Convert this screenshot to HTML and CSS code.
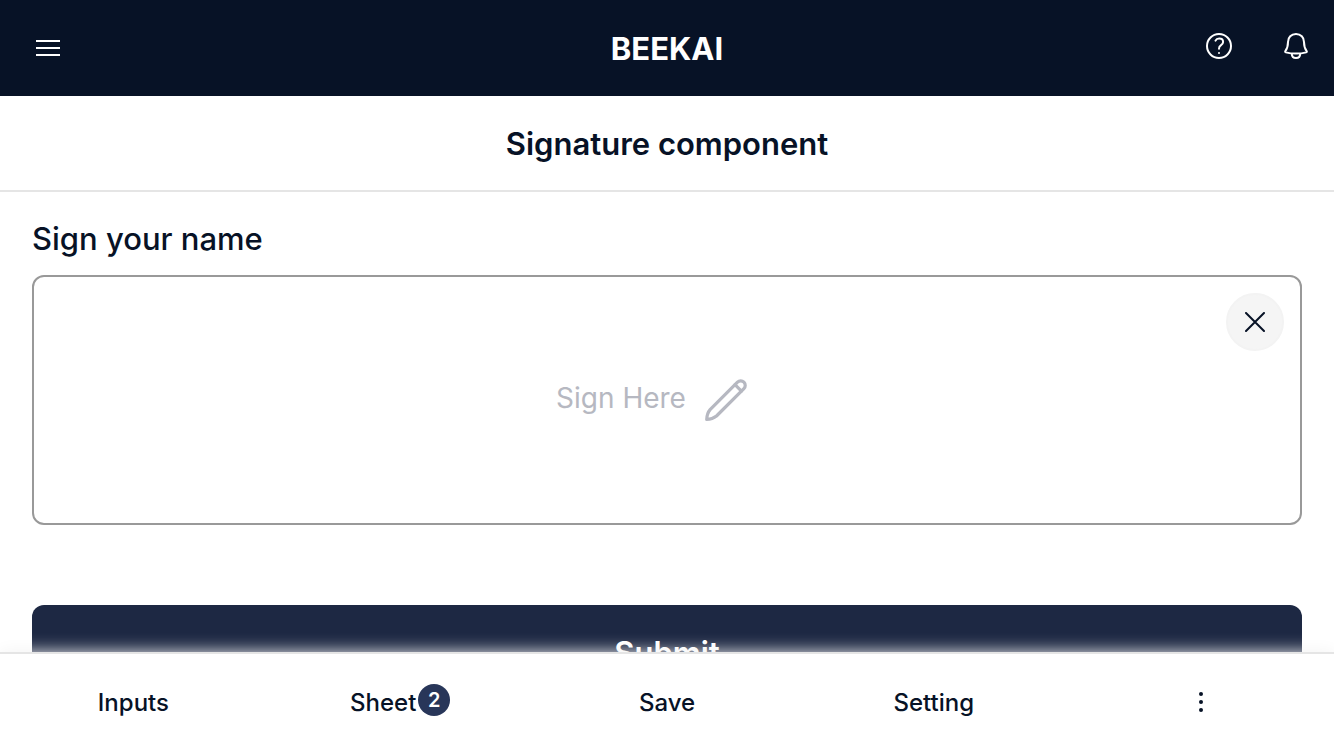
FILE: index.html
```html
<!DOCTYPE html>
<html lang="en">
<head>
  <meta charset="UTF-8" />
  <meta name="viewport" content="width=device-width, initial-scale=1.0" />
  <title>Signature component – BEEKAI</title>
  <link rel="stylesheet" href="styles.css">
</head>
<body>
  <header class="topbar">
    <div class="topbar-side">
      <button class="icon-btn" type="button" aria-label="Menu">
        <svg width="24" height="24" viewBox="0 0 24 24" fill="none" stroke="currentColor" stroke-width="2">
          <path d="M0 5h24M0 12h24M0 19h24" />
        </svg>
      </button>
    </div>
    <div class="brand">BEEKAI</div>
    <div class="topbar-side topbar-actions">
      <button class="icon-btn" type="button" aria-label="Help">
        <svg width="28" height="28" viewBox="0 0 28 28" fill="none" stroke="currentColor" stroke-width="2" stroke-linecap="round">
          <circle cx="14" cy="14" r="12" />
          <path d="M10.500 8.600C11.200 7.200 12.600 6.600 14.200 6.600c2.200 0 3.900 1.400 3.900 3.400 0 1.800-1.100 2.600-2.300 3.400-1.200.8-1.800 1.500-1.800 3.400" />
          <circle cx="14" cy="21" r="1" fill="currentColor" stroke="none" />
        </svg>
      </button>
      <button class="icon-btn" type="button" aria-label="Notifications">
        <svg width="28" height="28" viewBox="0 0 28 28" fill="none" stroke="currentColor" stroke-width="2" stroke-linejoin="round">
          <path d="M14 2C9.200 2 6 5.500 6 10c0 5-1 7-2.700 9.200-.4.600-.2 1 .5 1.200C7 21.200 10 21.600 14 21.600s7-.4 10.200-1.200c.7-.2.9-.6.5-1.200C23 17 22 15 22 10c0-4.500-3.200-8-8-8z" />
          <path d="M9.800 21.500c0 2.700 1.700 4.500 4.200 4.500s4.200-1.800 4.200-4.500" />
        </svg>
      </button>
    </div>
  </header>

  <div class="title-bar">
    <h1>Signature component</h1>
  </div>

  <main class="content">
    <h2 class="field-label">Sign your name</h2>
    <div class="sign-box">
      <div class="placeholder">
        <span>Sign Here</span>
        <svg width="48" height="48" viewBox="0 0 48 48" fill="none" stroke="currentColor" stroke-width="3.2" stroke-linejoin="round" stroke-linecap="round">
          <path d="M35.500 6.200a4.500 4.500 0 0 1 6.400 6.400L14.500 40C12 42 8.500 43.300 4.700 43.500 4.900 39.500 6 36 8.100 33.600z" />
          <path d="M33 8.700l6.400 6.400" />
        </svg>
      </div>
      <button class="clear-btn" type="button" aria-label="Clear signature">
        <svg width="20" height="20" viewBox="0 0 20 20" fill="none" stroke="currentColor" stroke-width="2" stroke-linecap="round">
          <path d="M1 1l18 18M19 1L1 19" />
        </svg>
      </button>
    </div>
    <button class="submit-btn" type="submit">Submit</button>
  </main>

  <nav class="bottom-nav">
    <a href="#inputs">Inputs</a>
    <a href="#sheet">Sheet<span class="badge">2</span></a>
    <a href="#save">Save</a>
    <a href="#setting">Setting</a>
    <button class="more-btn" type="button" aria-label="More">
      <svg width="4" height="20" viewBox="0 0 4 20" fill="currentColor">
        <circle cx="2" cy="2" r="2" />
        <circle cx="2" cy="10" r="2" />
        <circle cx="2" cy="18" r="2" />
      </svg>
    </button>
  </nav>
</body>
</html>
```

FILE: styles.css
```css
* { box-sizing: border-box; margin: 0; padding: 0; }
body {
  display: flex; flex-direction: column; height: 100vh; overflow: hidden;
  font-family: Inter, "Liberation Sans", sans-serif; background: #fff; color: #071226;
}
button { font-family: inherit; border: none; background: none; color: inherit; cursor: pointer; }
svg { display: block; }

.topbar {
  display: flex; align-items: center; flex-shrink: 0;
  height: 96px; padding: 0 24px 0 36px; background: #071226; color: #fff;
}
.topbar-side { flex: 1; }
.topbar-actions { display: flex; justify-content: flex-end; gap: 49px; padding-bottom: 4px; }
.icon-btn { display: block; }
.brand { font-size: 31px; font-weight: 700; line-height: 40px; padding: 2px 12px 0 0; }

.title-bar {
  flex-shrink: 0; padding: 28px 32px 26px; border-bottom: 2px solid #e5e5e5; text-align: center;
}
.title-bar h1 { font-size: 31px; font-weight: 600; line-height: 40px; }

.content { flex: 1; min-height: 0; overflow: hidden; padding: 27px 32px 0; }
.field-label { font-size: 31px; font-weight: 500; line-height: 40px; margin-bottom: 16px; }
.sign-box {
  position: relative; display: flex; align-items: center; justify-content: center;
  height: 250px; margin-bottom: 80px; border: 2px solid #999; border-radius: 12px;
}
.placeholder {
  display: flex; align-items: center; gap: 16px; padding-right: 28px;
  font-size: 28px; line-height: 36px; color: #b6b8c1;
}
.placeholder span { padding-bottom: 4px; }
.clear-btn {
  position: absolute; top: 16px; right: 16px;
  display: flex; align-items: center; justify-content: center;
  width: 58px; height: 58px; border: 2px solid #f3f3f3; border-radius: 50%; background: #f5f5f5;
}
.submit-btn {
  display: block; width: 100%; padding: 28px; border-radius: 12px;
  background: #1d2843; color: #fff; font-size: 31px; font-weight: 600; line-height: 40px;
}

.bottom-nav {
  position: relative; display: grid; grid-template-columns: repeat(5, 1fr);
  flex-shrink: 0; height: 98px; border-top: 2px solid #e5e5e5; background: #fff;
  box-shadow: 0 0 16px #f2f2f2;
}
.bottom-nav a {
  display: flex; justify-content: center; align-items: center; gap: 2px; padding-top: 2px;
  color: inherit; text-decoration: none; font-size: 24px; font-weight: 500; line-height: 32px;
}
.badge {
  width: 32px; height: 32px; margin-bottom: 6px; border-radius: 50%;
  background: #283659; color: #fff; font-size: 20px; font-weight: 600; text-align: center;
}
.more-btn { display: flex; justify-content: center; align-items: center; }
```
